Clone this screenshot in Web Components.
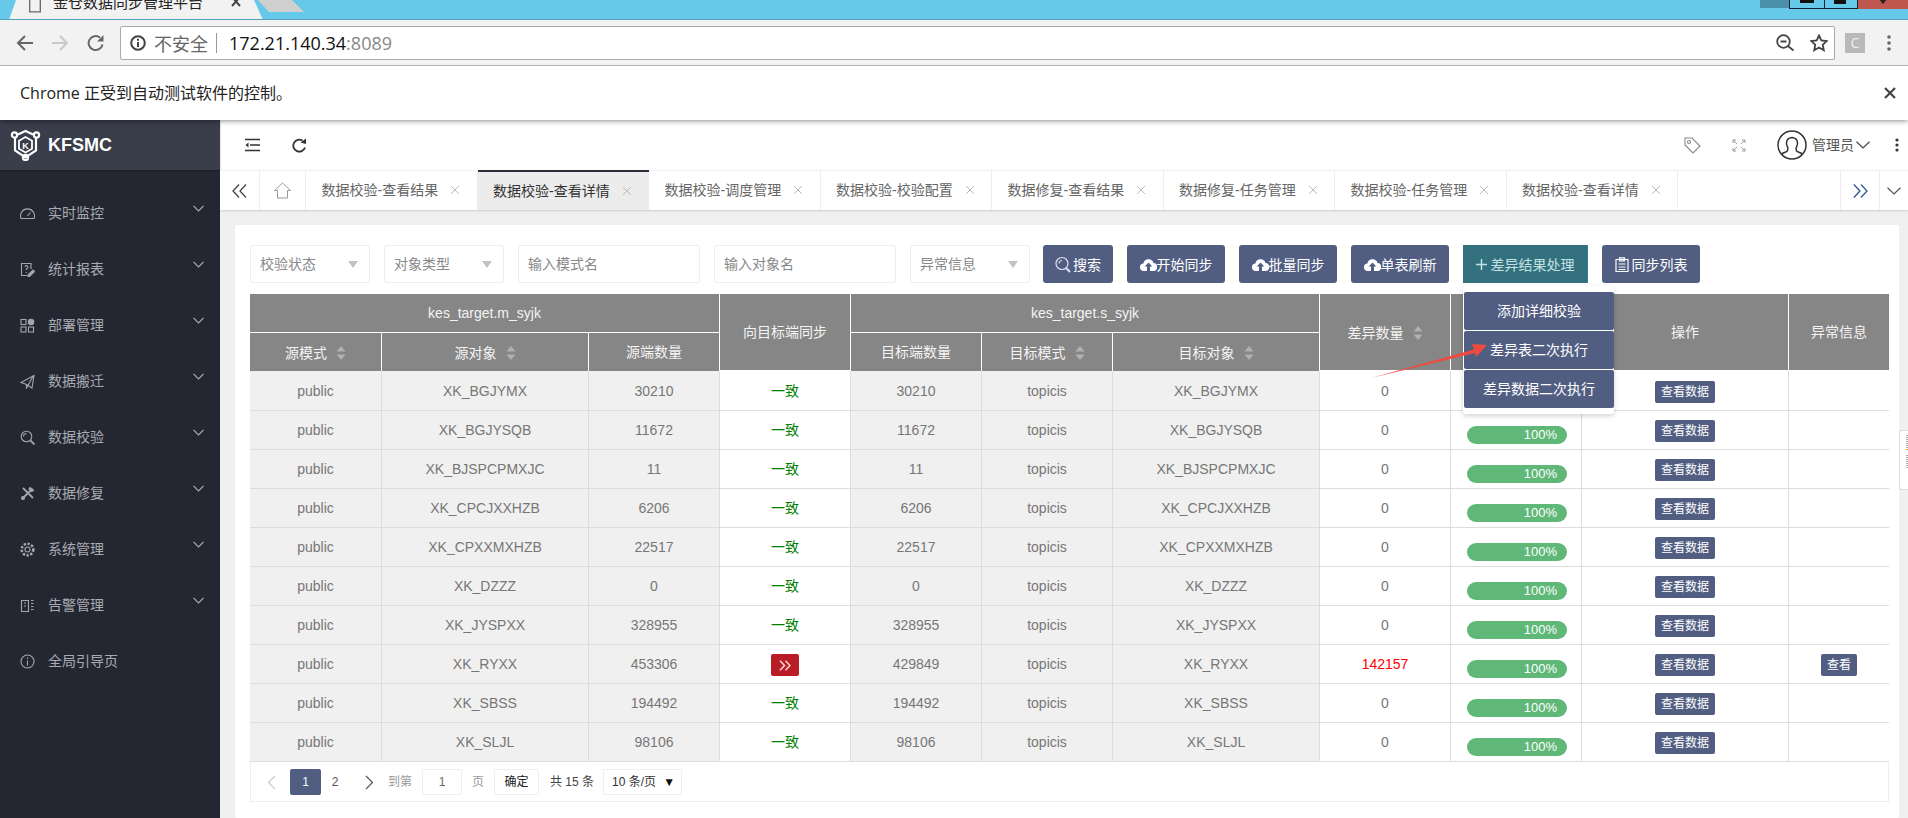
<!DOCTYPE html>
<html lang="zh">
<head>
<meta charset="utf-8">
<title>KFSMC</title>
<style>
html,body{margin:0;padding:0;width:1908px;height:818px;overflow:hidden;background:#f0f0f0;font-family:"Liberation Sans","Noto Sans CJK SC",sans-serif}
#root{display:flex;flex-direction:column;width:1908px;height:818px}
#app{display:flex;flex:1;min-height:0}
#main{flex:1;display:flex;flex-direction:column;min-width:0}
</style>
</head>
<body>
<div id="root">
  <browser-chrome></browser-chrome>
  <div id="app">
    <app-sidebar></app-sidebar>
    <div id="main">
      <top-header></top-header>
      <tab-bar></tab-bar>
      <content-card></content-card>
    </div>
  </div>
</div>
<script>
const FONT = '"Liberation Sans","Noto Sans CJK SC",sans-serif';
function comp(name, html, init, connected){
  customElements.define(name, class extends HTMLElement{
    constructor(){super();const r=this.attachShadow({mode:'open'});r.innerHTML=html;if(init)init(r,this);}
    connectedCallback(){if(connected)connected(this.shadowRoot,this);}
  });
}
const chev=(w,h,c,sw)=>`<svg width="${w}" height="${h}" viewBox="0 0 ${w} ${h}" fill="none" stroke="${c}" stroke-width="${sw||1.2}"><path d="M.5 .8L${w/2} ${h-1}L${w-.5} .8"/></svg>`;

comp('browser-chrome',`<style>
:host{display:block;position:relative;z-index:10;box-shadow:0 1px 5px rgba(0,0,0,.45);font-family:"Open Sans","Noto Sans CJK SC",sans-serif}
.strip{height:19px;background:#66c9ea;border-bottom:1px solid #4f9fb8;display:flex;overflow:hidden;align-items:flex-start}
.tab{width:254px;height:20px;margin-left:9px;background:#f2f2f2;clip-path:polygon(7px 0,245px 0,254px 20px,0 20px);display:flex;align-items:flex-start;box-sizing:border-box;padding-left:20px;flex:none}
.tab svg{flex:none}
.t{margin:-9px 0 0 12px;font:15px/22px "Noto Sans CJK SC",sans-serif;color:#222;white-space:nowrap;width:150px}
.x{margin:-3px 0 0 27px;flex:none}
.new{flex:none;width:46px;height:12px;background:#cfcfcf;margin-left:-5px;clip-path:polygon(0 0,34px 0,46px 12px,11px 12px)}
.win{margin-left:auto;display:flex;height:9px;flex:none}
.win div{box-sizing:border-box;height:9px;display:flex;justify-content:center;align-items:flex-start}
.w0{width:29px;height:8px!important;background:#4a90a8}
.w1{width:36px;border:1px solid #123;border-top:0;background:#66c9ea}
.w2{width:33px;border-bottom:1px solid #123;border-right:1px solid #123;background:#66c9ea}
.w3{width:50px;background:#c0574f}
.bar{height:45px;background:#f2f2f2;border-bottom:1px solid #b5b5b5;display:flex;align-items:center;box-sizing:content-box;padding-left:16px}
.nav{display:flex;align-items:center;flex:none;width:104px}
.url{flex:none;box-sizing:border-box;width:1715px;height:34px;background:#fff;border:1px solid #aaa;border-radius:2px;display:flex;align-items:center;padding-left:9px;font-size:18px;white-space:nowrap}
.insec{color:#666;margin-left:8px;font:18px/24px "Noto Sans CJK SC",sans-serif;width:54px}
.sep{width:1px;height:20px;background:#999;margin:0 12px 0 8px}
.host{color:#111;letter-spacing:0}
.port{color:#888}
.end{margin-left:auto;display:flex;align-items:center;gap:16px;padding-right:6px}
.ext{width:20px;height:20px;background:#b9b9b9;color:#eee;font:14px/20px "Open Sans",sans-serif;text-align:center;margin-left:10px;flex:none}
.dots{margin-left:22px;flex:none}
.info{height:54px;background:#fff;display:flex;align-items:center;padding:0 11px 0 20px;font:16px/22px "Open Sans","Noto Sans CJK SC",sans-serif;color:#222}
.info svg{margin-left:auto}
</style>
<div class="strip">
  <div class="tab">
    <svg width="12" height="13" viewBox="0 0 12 13" fill="none" stroke="#666" stroke-width="1.3"><path d="M.7 -3V11.8H11.3V-3"/></svg>
    <span class="t">金仓数据同步管理平台</span>
    <svg class="x" width="12" height="12" viewBox="0 0 12 12" stroke="#444" stroke-width="2"><path d="M2 0L10 9M10 0L2 9"/></svg>
  </div>
  <div class="new"></div>
  <div class="win">
    <div class="w0"></div>
    <div class="w1"><svg width="14" height="3"><rect width="14" height="3" fill="#111"/></svg></div>
    <div class="w2"><svg width="14" height="4"><rect width="12" height="4" fill="#111"/></svg></div>
    <div class="w3"><svg width="12" height="4" stroke="#222" stroke-width="2"><path d="M2 -2L7 3M10 -2L5 3"/></svg></div>
  </div>
</div>
<div class="bar">
  <div class="nav">
    <svg width="18" height="18" viewBox="0 0 18 18" fill="none" stroke="#666" stroke-width="2"><path d="M17 9H2M9 2L2 9l7 7"/></svg>
    <svg style="margin-left:17px" width="18" height="18" viewBox="0 0 18 18" fill="none" stroke="#c8c8c8" stroke-width="2"><path d="M1 9H16M9 2l7 7-7 7"/></svg>
    <svg style="margin-left:18px" width="18" height="18" viewBox="0 0 18 18" fill="none" stroke="#666" stroke-width="2"><path d="M15.500 10.500A7 7 0 1 1 13 3.600"/><path d="M16.500 1v6.500h-6.500z" fill="#666" stroke="none"/></svg>
  </div>
  <div class="url">
    <svg width="16" height="16" viewBox="0 0 16 16" fill="none" stroke="#444" stroke-width="2"><circle cx="8" cy="8" r="6.800"/><path d="M8 7v5M8 3.700v2"/></svg>
    <span class="insec">不安全</span><span class="sep"></span>
    <span class="host">172.21.140.34</span><span class="port">:8089</span>
    <span class="end">
      <svg width="18" height="18" viewBox="0 0 18 18" fill="none" stroke="#444" stroke-width="1.800"><circle cx="7.500" cy="7.500" r="6.300"/><path d="M4.500 7.500h6M12 12l5.500 4.500"/></svg>
      <svg width="18" height="18" viewBox="0 0 18 18" fill="none" stroke="#444" stroke-width="1.800"><path d="M9 1.500l2.300 5 5.400.6-4 3.700 1.100 5.400L9 13.500l-4.800 2.700 1.100-5.400-4-3.700 5.400-.6z"/></svg>
    </span>
  </div>
  <span class="ext">C</span>
  <svg class="dots" width="4" height="16"><circle cx="2" cy="2" r="1.800" fill="#666"/><circle cx="2" cy="8" r="1.800" fill="#666"/><circle cx="2" cy="14" r="1.800" fill="#666"/></svg>
</div>
<div class="info"><span>Chrome 正受到自动测试软件的控制。</span>
  <svg width="14" height="14" viewBox="0 0 14 14" stroke="#444" stroke-width="2.200"><path d="M2 2l10 10M12 2L2 12"/></svg></div>`);

const MENU=[
 ['实时监控','<path d="M1 12.500a7 7 0 1 1 13 0z"/><path d="M7.500 10l3-3.500"/>',1],
 ['统计报表','<path d="M11 7V1.500H1.500v12H7"/><path d="M5 5a1.500 1.500 0 1 1 2 1.500c-.7.4-.7.8-.7 1.500M6.300 10v1"/><path d="M8 13l5-5 1.500 1.500-5 5H8z" fill="#a3a6ae"/>',1],
 ['部署管理','<rect x="1" y="1.500" width="5" height="5"/><rect x="1" y="9" width="5" height="5"/><rect x="8.500" y="9" width="5" height="5"/><circle cx="11" cy="4" r="2.700" fill="#a3a6ae"/>',1],
 ['数据搬迁','<path d="M1 8.500L14 1.500 12 14 6.500 10.500 1 8.500zM6.500 10.500V14l7-12.500"/>',1],
 ['数据校验','<circle cx="6.500" cy="6.500" r="5.300"/><path d="M10.500 10.500l4 4" stroke-width="1.800"/><path d="M3.500 6.500a3 3 0 0 1 3-3"/>',1],
 ['数据修复','<path d="M3 2l10 10M12.500 2.500l-9.500 9.500" stroke-width="1.800"/><circle cx="3" cy="12" r="1.500" fill="#a3a6ae"/><path d="M10 1.500l3.500 3-2 1-2.500-2.500z" fill="#a3a6ae"/>',1],
 ['系统管理','<circle cx="7.500" cy="7.500" r="2.500"/><circle cx="7.500" cy="7.500" r="5.800" stroke-width="2.600" stroke-dasharray="2.300 1.500"/>',1],
 ['告警管理','<path d="M1.500 2.500h7v11h-7zM8.500 2.500v11"/><path d="M11 2.500h2.500M11 5.500h2.500M11 8.500h2.500M11 11.500h2.500M4 5h2M4 8h2"/>',1],
 ['全局引导页','<circle cx="7.500" cy="7.500" r="6.500"/><path d="M7.500 6.500v5M7.500 3.500v1.500"/>',0],
];
comp('side-item',`<style>
:host{display:flex;align-items:center;height:56px;padding-left:20px;box-sizing:border-box;padding-right:16px}
.ic{display:flex;width:15px;flex:none}
.l{margin-left:13px;white-space:nowrap}
.a{margin-left:auto;display:flex;margin-top:-9px}
</style><span class="ic"><slot></slot></span><span class="l"></span><span class="a"></span>`,null,(r,h)=>{
  r.querySelector('.l').textContent=h.getAttribute('label');
  if(h.hasAttribute('arrow'))r.querySelector('.a').innerHTML=chev(11,7,'#a8abb2',1.2);
});
comp('app-sidebar',`<style>
:host{display:flex;flex-direction:column;width:220px;flex:none;background:#242731;color:#a8abb2;font:14px/20px ${FONT}}
.logo{height:50px;background:#3a3d4a;display:flex;align-items:center;padding-left:10px;color:#fff;font:bold 18px/20px ${FONT};box-shadow:0 1px 2px rgba(0,0,0,.3);position:relative}
.logo span{margin-left:7px}
.menu{padding-top:15px}
</style>
<div class="logo">
<svg width="31" height="32" viewBox="0 0 31 32" fill="none" stroke="#fff" stroke-width="2.200"><path d="M8 5.500L15.500 2 23 5.500M5 8.500v13l10.500 7 10.500-7v-13"/><circle cx="4.500" cy="6" r="2.600"/><circle cx="26.500" cy="6" r="2.600"/><circle cx="15.500" cy="28.500" r="2.600"/><path d="M15.500 8l6.500 3.700v8L15.500 23.500 9 19.700v-8z" stroke-width="1.800"/><text x="15.500" y="19.500" font-size="9" font-weight="bold" fill="#fff" stroke="none" text-anchor="middle" font-family="Liberation Sans">K</text></svg>
<span>KFSMC</span></div>
<div class="menu"></div>`,(r)=>{
  r.querySelector('.menu').innerHTML=MENU.map(m=>`<side-item label="${m[0]}" ${m[2]?'arrow':''}><svg viewBox="0 0 15 15" width="15" height="15" fill="none" stroke="#a3a6ae" stroke-width="1.100">${m[1]}</svg></side-item>`).join('');
});

comp('top-header',`<style>
:host{display:flex;align-items:center;height:50px;background:#fff;flex:none;padding:0 9px 0 25px;font:14px/20px ${FONT};color:#555}
svg{flex:none;display:block}
.r{margin-left:auto;display:flex;align-items:center}
</style>
<svg width="15" height="14" viewBox="0 0 15 14" fill="none" stroke="#333" stroke-width="1.500"><path d="M0 1.500h15M5 7h10M0 12.500h15"/><path d="M3.500 4.500L.5 7l3 2.500z" fill="#333" stroke="none"/></svg>
<svg style="margin-left:32px" width="15" height="15" viewBox="0 0 15 15" fill="none" stroke="#333" stroke-width="1.800"><path d="M13 9.500A6 6 0 1 1 10.500 2.500"/><path d="M8.500 4.500L14 6V.5z" fill="#333" stroke="none"/></svg>
<div class="r">
<svg width="17" height="17" viewBox="0 0 17 17" fill="none" stroke="#888" stroke-width="1.100"><path d="M1 1h7l8 8-7 7-8-8z"/><circle cx="5" cy="5" r="1.500"/></svg>
<svg style="margin-left:31px" width="14" height="13" viewBox="0 0 14 13" fill="none" stroke="#999" stroke-width="1"><path d="M1 4V1h3M13 4V1h-3M1 9v3h3M13 9v3h-3M1 1l4 4M13 1L9 5M1 12l4-4M13 12L9 8"/></svg>
<svg style="margin-left:31px" width="30" height="30" viewBox="0 0 30 30" fill="none" stroke="#333" stroke-width="1.500"><circle cx="15" cy="15" r="14"/><path d="M10.500 21c0-2 1-2.500 0-4-2-3-1.500-9 4.500-9.500 6 .5 6.500 6.500 4.500 9.500-1 1.500 0 2 0 4 1.500 1.500 4.500 1 6 3.500M10.500 21c-1.500 1.500-4.500 1-6 3.500"/></svg>
<span style="margin-left:5px">管理员</span>
<span style="margin-left:2px;display:flex">${chev(14,8,'#444',1.200)}</span>
<svg style="margin-left:25px" width="4" height="14"><circle cx="2" cy="2" r="1.600" fill="#333"/><circle cx="2" cy="7" r="1.600" fill="#333"/><circle cx="2" cy="12" r="1.600" fill="#333"/></svg>
</div>`);

const TABS=['数据校验-查看结果','数据校验-查看详情','数据校验-调度管理','数据校验-校验配置','数据修复-查看结果','数据修复-任务管理','数据校验-任务管理','数据校验-查看详情'];
comp('tab-bar',`<style>
:host{display:flex;height:40px;background:#fff;flex:none;box-sizing:border-box;box-shadow:0 1px 2px rgba(0,0,0,.15);position:relative;border-top:1px solid #f2f2f2;font:14px/20px ${FONT}}
.b{display:flex;align-items:center;justify-content:center;box-sizing:border-box;border-right:1px solid #eee;flex:none}
.tabs{display:flex;flex:none;width:1374px}
.sp{flex:1}
.t{width:171.500px;box-sizing:border-box;flex:none;display:flex;align-items:center;padding:0 0 0 15.500px;color:#666;border-right:1px solid #eee;white-space:nowrap;margin-top:-1px;height:40px}
.t i{font-style:normal;margin-left:12px;display:flex}
.t.on{background:#ececec;border-top:2px solid #2a2c3a;color:#333;border-right:0}
</style>
<div class="b" style="width:40px"><svg width="15" height="14" viewBox="0 0 15 14" fill="none" stroke="#444" stroke-width="1.300"><path d="M7 .5L1 7l6 6.500M14 .5L8 7l6 6.500"/></svg></div>
<div class="b" style="width:46px"><svg width="17" height="17" viewBox="0 0 17 17" fill="none" stroke="#999" stroke-width="1"><path d="M.5 8.500L8.500 1l8 7.500H13.500V16h-10V8.500z"/></svg></div>
<div class="tabs"></div><div class="sp"></div>
<div class="b" style="width:40px;border-left:1px solid #eee"><svg width="15" height="14" viewBox="0 0 15 14" fill="none" stroke-width="1.300"><path d="M.5 .5L6.500 7l-6 6.500" stroke="#d98a2b" stroke-width=".8"/><path d="M1 .5L7 7l-6 6.500M8 .5L14 7l-6 6.500" stroke="#2a5f9e"/></svg></div>
<div class="b" style="width:28px;border:0">${chev(14,8,'#555',1.200)}</div>`,(r)=>{
  r.querySelector('.tabs').innerHTML=TABS.map((t,i)=>`<div class="t${i==1?' on':''}">${t}<i><svg width="10" height="10" viewBox="0 0 10 10" stroke="#bbb" stroke-width="1"><path d="M1 1l8 8M9 1L1 9"/></svg></i></div>`).join('');
});

comp('content-card',`<style>
:host{display:block;flex:1;min-height:0;box-sizing:border-box;padding:15px 9px 0 15px;position:relative}
.card{background:#fff;height:100%;box-sizing:border-box;padding:20px 10px 0 15px;position:relative;border-radius:2px}
.arrow{position:absolute;left:1135px;top:115px;z-index:5}
.rail{position:absolute;right:0;top:220px;width:9px;height:60px;box-sizing:border-box;background:#fff;border:1px solid #ddd;border-right:0;border-radius:3px 0 0 3px;padding:4px 0 0 6px}
.rail i{display:block;height:14px;background:repeating-linear-gradient(#aaa 0 1px,#fff 1px 2px)}
.rail b{display:block;height:1px;background:#e39a2c;margin:0 0 5px}
</style>
<div class="card">
<filter-bar></filter-bar>
<data-table></data-table>
<pager-bar></pager-bar>
<svg class="arrow" width="120" height="40" viewBox="0 0 120 40"><path d="M1 38L104 9.500 102 4 117 5 106 17 105 13z" fill="#ef4a3f"/></svg>
</div>
<div class="rail"><i></i><b></b><i></i></div>`);

comp('filter-bar',`<style>
:host{display:flex;height:38px;margin-bottom:11px;font:14px/20px ${FONT};color:#888;position:relative;z-index:3}
.f{box-sizing:border-box;border:1px solid #eee;border-radius:2px;background:#fff;height:38px;display:flex;align-items:center;padding:0 11px 0 9px;margin-right:14px;flex:none;justify-content:space-between}
.s{width:120px}.i{width:182px}
.c{width:0;height:0;border:5.500px solid transparent;border-top:7px solid #c2c2c2;border-bottom:0}
.btn{box-sizing:border-box;height:38px;background:#515e82;color:#fff;border-radius:3px;display:flex;align-items:center;justify-content:center;margin-right:14px;flex:none;white-space:nowrap;padding-top:1px}
.wrap{position:relative;flex:none;margin-right:14px}
.teal{background:#33717f;color:#c4e2e2;width:125px;border-radius:0;border-right:1px solid #1f8a8a;margin:0}
.dd{position:absolute;left:0;top:41px;width:151px;height:128px;box-sizing:border-box;background:#fff;border-radius:2px;box-shadow:0 2px 5px rgba(0,0,0,.18);padding:6px 0 0 1px;z-index:3}
.dd div{height:38px;background:#515e82;color:#fff;text-align:center;line-height:39px;margin-bottom:1px;border-radius:2px}
</style>
<div class="f s">校验状态<span class="c"></span></div>
<div class="f s">对象类型<span class="c"></span></div>
<div class="f i">输入模式名</div>
<div class="f i">输入对象名</div>
<div class="f s" style="margin-right:13px">异常信息<span class="c"></span></div>
<div class="btn" style="width:70px"><svg width="16" height="17" viewBox="0 0 16 17" fill="none" stroke="#dfe3ee" stroke-width="1.200"><circle cx="7" cy="7.500" r="6"/><path d="M11 12l4 4" stroke-width="2"/><path d="M4 7.500a3 3 0 0 1 3-3"/></svg><span style="margin-left:2px">搜索</span></div>
<div class="btn" style="width:98px"><svg width="17" height="14" viewBox="0 0 17 14" fill="#fff"><path d="M4 13a3.700 3.700 0 0 1-.6-7.400A5.200 5.200 0 0 1 13.500 5 4 4 0 0 1 13 13h-3V8.500h2.300L8.500 4.500 4.700 8.500H7V13z"/></svg>开始同步</div>
<div class="btn" style="width:98px"><svg width="17" height="14" viewBox="0 0 17 14" fill="#fff"><path d="M4 13a3.700 3.700 0 0 1-.6-7.400A5.200 5.200 0 0 1 13.500 5 4 4 0 0 1 13 13h-3V8.500h2.300L8.500 4.500 4.700 8.500H7V13z"/></svg>批量同步</div>
<div class="btn" style="width:98px"><svg width="17" height="14" viewBox="0 0 17 14" fill="#fff"><path d="M4 13a3.700 3.700 0 0 1-.6-7.400A5.200 5.200 0 0 1 13.500 5 4 4 0 0 1 13 13h-3V8.500h2.300L8.500 4.500 4.700 8.500H7V13z"/></svg>单表刷新</div>
<div class="wrap"><div class="btn teal"><svg width="11" height="11" viewBox="0 0 11 11" stroke="#c4e2e2" stroke-width="1.500"><path d="M5.500 0v11M0 5.500h11"/></svg><span style="margin-left:4px">差异结果处理</span></div>
<div class="dd"><div>添加详细校验</div><div>差异表二次执行</div><div>差异数据二次执行</div></div></div>
<div class="btn" style="width:98px"><svg width="14" height="15" viewBox="0 0 14 15" fill="none" stroke="#fff" stroke-width="1.200"><path d="M1 2.500h12v12H1zM4.500 .8h5v3h-5zM3.500 7h7M3.500 10h7M3.500 12.500h7"/></svg><span style="margin-left:3px">同步列表</span></div>`);

const ROWS=[['XK_BGJYMX',30210,30210,0],['XK_BGJYSQB',11672,11672,0],['XK_BJSPCPMXJC',11,11,0],['XK_CPCJXXHZB',6206,6206,0],['XK_CPXXMXHZB',22517,22517,0],['XK_DZZZ',0,0,0],['XK_JYSPXX',328955,328955,0],['XK_RYXX',453306,429849,142157],['XK_SBSS',194492,194492,0],['XK_SLJL',98106,98106,0]];
const sort=`<svg width="10" height="14" viewBox="0 0 10 14" fill="#b0b0b0"><path d="M5 0l4.500 5.500h-9zM5 14L.5 8.500h9z"/></svg>`;
const W=[132,207,131,131,131,131,207,131,131,207,100];
comp('data-table',`<style>
:host{display:block;font:14px/20px ${FONT};color:#777;width:1639px}
table{border-collapse:separate;border-spacing:0;table-layout:fixed;width:1639px}
th,td{box-sizing:border-box;padding:0;text-align:center;border-right:1px solid #ddd;border-bottom:1px solid #ddd;height:39px}
th{background:#868686;color:#f4f4f4;font-weight:normal;border-right:1px solid #fff;border-bottom:1px solid #fff}
tr.h2 th{height:38px;border-bottom:0}
th span{display:inline-flex;align-items:center;gap:9px;vertical-align:middle}
td.g{background:#f0f0f0}
tbody tr:first-child td{height:40px}
tbody tr:last-child td{border-bottom:0;height:38px}
.ok{color:#008000}
.bad{display:inline-flex;width:28px;height:22px;background:#b91c24;border-radius:2px;align-items:center;justify-content:center;vertical-align:middle;margin-top:2px}
.diff{color:#f00}
.pc{vertical-align:top;padding:15px 0 0 16px}
.pb{width:100px;height:18px;border-radius:9px;background:#5fb878;color:#fff;font:13px/18px ${FONT};text-align:right;padding-right:10px;box-sizing:border-box}
tbody tr:first-child .pc{padding-top:16px}
.bt{display:flex;justify-content:center;align-items:flex-start;height:38px;padding-top:9px;box-sizing:border-box}
td.op{vertical-align:top;padding:0}
tbody tr:first-child .bt{padding-top:10px}
.bt b{display:block;font-weight:normal;font-size:12px;line-height:22px;height:22px;background:#515e82;color:#fff;border-radius:2px;padding:0 6px}
</style><table><colgroup></colgroup><thead>
<tr><th colspan="3">kes_target.m_syjk</th><th rowspan="2">向目标端同步</th><th colspan="3">kes_target.s_syjk</th><th rowspan="2"><span>差异数量${sort}</span></th><th rowspan="2"></th><th rowspan="2">操作</th><th rowspan="2" style="border-right:0">异常信息</th></tr>
<tr class="h2"><th><span>源模式${sort}</span></th><th><span>源对象${sort}</span></th><th>源端数量</th><th>目标端数量</th><th><span>目标模式${sort}</span></th><th><span>目标对象${sort}</span></th></tr>
</thead><tbody></tbody></table>`,(r)=>{
  r.querySelector('colgroup').innerHTML=W.map(w=>`<col style="width:${w}px">`).join('');
  r.querySelector('tbody').innerHTML=ROWS.map((x,i)=>{
    const bad=x[3]>0;
    return `<tr><td class="g">public</td><td class="g">${x[0]}</td><td class="g">${x[1]}</td>
    <td>${bad?`<span class="bad"><svg width="12" height="11" viewBox="0 0 12 11" fill="none" stroke="#f6d5d5" stroke-width="1.600"><path d="M1 .8L5.500 5.500 1 10.200M6.500 .8L11 5.500 6.500 10.200"/></svg></span>`:`<span class="ok">一致</span>`}</td>
    <td class="g">${x[2]}</td><td class="g">topicis</td><td class="g">${x[0]}</td>
    <td${bad?' class="diff"':''}>${x[3]}</td>
    <td class="pc"><div class="pb">${i?'100%':''}</div></td>
    <td class="op"><div class="bt"><b>查看数据</b></div></td>
    <td class="op" style="border-right:0">${bad?'<div class="bt"><b>查看</b></div>':''}</td></tr>`;
  }).join('');
});

comp('pager-bar',`<style>
:host{display:flex;box-sizing:border-box;width:1639px;height:41px;border:1px solid #eee;border-top:1px solid #ddd;padding:7px 0 0 14px;font:12px/26px ${FONT};color:#999;align-items:flex-start}
:host>*{flex:none;height:26px}
.ar{display:flex;align-items:center;width:12px;justify-content:center}
.cur{width:31px;background:#515e82;color:#fff;text-align:center;border-radius:2px;margin-left:13px;height:26px;line-height:26px}
.two{width:28px;text-align:center;color:#555}
.box{box-sizing:border-box;border:1px solid #eee;border-radius:2px;text-align:center;line-height:24px}
</style>
<span class="ar"><svg width="9" height="15" viewBox="0 0 9 15" fill="none" stroke="#ccc" stroke-width="1.200"><path d="M8 1L1.500 7.500 8 14"/></svg></span>
<span class="cur">1</span><span class="two">2</span>
<span class="ar" style="margin-left:14px"><svg width="9" height="15" viewBox="0 0 9 15" fill="none" stroke="#555" stroke-width="1.200"><path d="M1 1l6.500 6.500L1 14"/></svg></span>
<span style="margin-left:13px">到第</span>
<span class="box" style="width:40px;margin-left:10px;color:#666">1</span>
<span style="margin-left:10px">页</span>
<span class="box" style="width:45px;margin-left:10px;color:#222">确定</span>
<span style="margin-left:11px;color:#444">共 15 条</span>
<span class="box" style="width:79px;margin-left:9px;color:#333;display:flex;justify-content:space-between;padding:0 6px 0 8px"><span>10 条/页</span><span style="font-size:12px;color:#111">▼</span></span>`);
</script>
</body>
</html>
